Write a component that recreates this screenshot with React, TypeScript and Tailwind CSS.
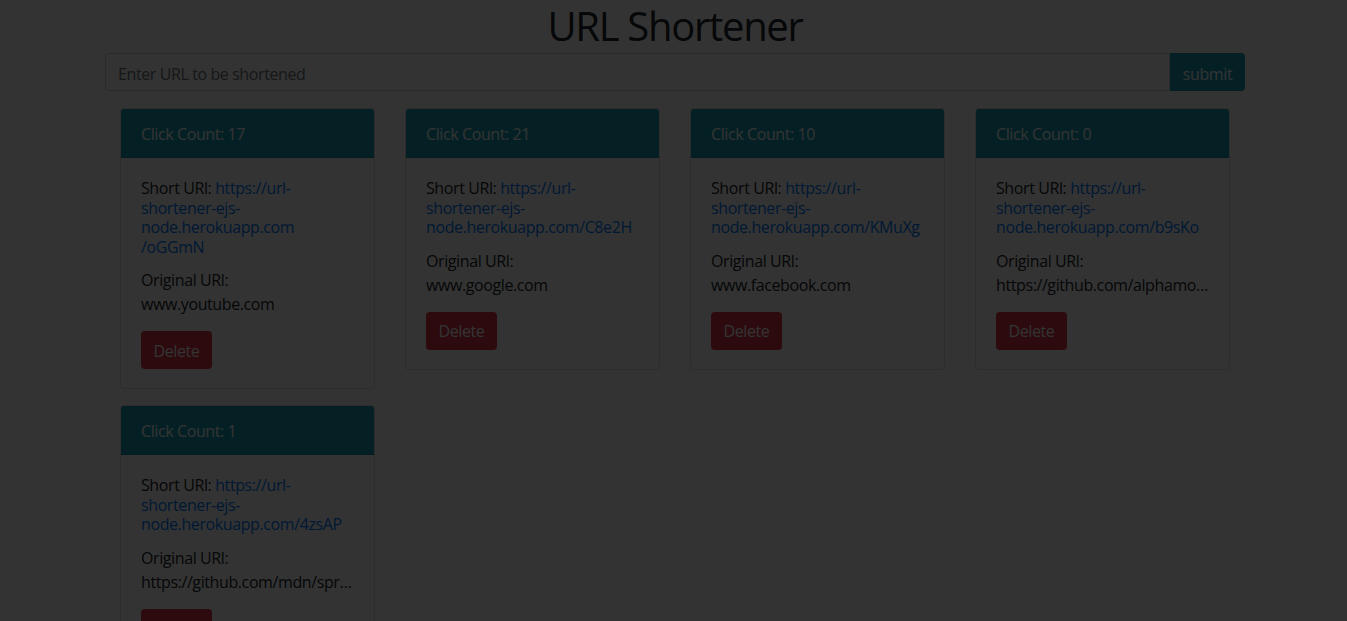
import React from "react";

type Item = { count: number; short: string[]; original: string };

const items: Item[] = [
  {
    count: 17,
    short: ["https://url-", "shortener-ejs-", "node.herokuapp.com", "/oGGmN"],
    original: "www.youtube.com",
  },
  {
    count: 21,
    short: ["https://url-", "shortener-ejs-", "node.herokuapp.com/C8e2H"],
    original: "www.google.com",
  },
  {
    count: 10,
    short: ["https://url-", "shortener-ejs-", "node.herokuapp.com/KMuXg"],
    original: "www.facebook.com",
  },
  {
    count: 0,
    short: ["https://url-", "shortener-ejs-", "node.herokuapp.com/b9sKo"],
    original: "https://github.com/alphamoon/url-shortener",
  },
  {
    count: 1,
    short: ["https://url-", "shortener-ejs-", "node.herokuapp.com/4zsAP"],
    original: "https://github.com/mdn/sprints/issues",
  },
];

function Card({ item }: { item: Item }) {
  return (
    <div className="w-[285px] px-[15px] mb-[16px]">
      <div className="rounded-[4px] border border-black/[0.125] bg-white overflow-hidden">
        <div className="bg-[#17a2b8] text-white px-[20px] pt-[13px] pb-[11px] leading-[24px] border-b border-black/[0.125]">
          Click Count: {item.count}
        </div>
        <div className="px-[20px] pt-[21px] pb-[19px] text-[#212529]">
          <p className="leading-[19.5px] mb-[11px]">
            Short URl:{" "}
            <a href="#" className="text-[#007bff]">
              {item.short.map((s, i) => (
                <React.Fragment key={i}>
                  {i > 0 && <br />}
                  {s}
                </React.Fragment>
              ))}
            </a>
          </p>
          <p className="leading-[24px]">Original URl:</p>
          <p className="leading-[24px] truncate">{item.original}</p>
          <button className="mt-[15px] h-[38px] w-[71px] pt-[1px] rounded-[4px] bg-[#dc3545] text-white leading-[24px]">
            Delete
          </button>
        </div>
      </div>
    </div>
  );
}

export default function App() {
  return (
    <div
      className="relative min-h-[621px] w-[1350px] bg-white text-[16px] tracking-[-0.4px] text-[#212529]"
      style={{ fontFamily: '"Open Sans", "Noto Sans", sans-serif' }}
    >
      <div className="w-[1140px] mx-auto">
        <h1 className="text-center text-[40px] leading-[48px] tracking-[-1.3px] font-normal pt-[2px] mb-[3px]">
          URL Shortener
        </h1>
        <div className="flex h-[38px]">
          <input
            className="flex-1 h-[38px] border border-[#ced4da] rounded-l-[4px] px-[12px] pt-[3px] text-[16px] tracking-[-0.4px] placeholder:text-[#6c757d] outline-none"
            placeholder="Enter URL to be shortened"
          />
          <button className="w-[75px] h-[38px] pt-[3px] bg-[#17a2b8] text-white rounded-r-[4px]">submit</button>
        </div>
        <div className="flex flex-wrap mt-[17px]">
          {items.map((it, i) => (
            <Card key={i} item={it} />
          ))}
        </div>
      </div>
      <div className="fixed inset-0 bg-black/80" />
    </div>
  );
}
